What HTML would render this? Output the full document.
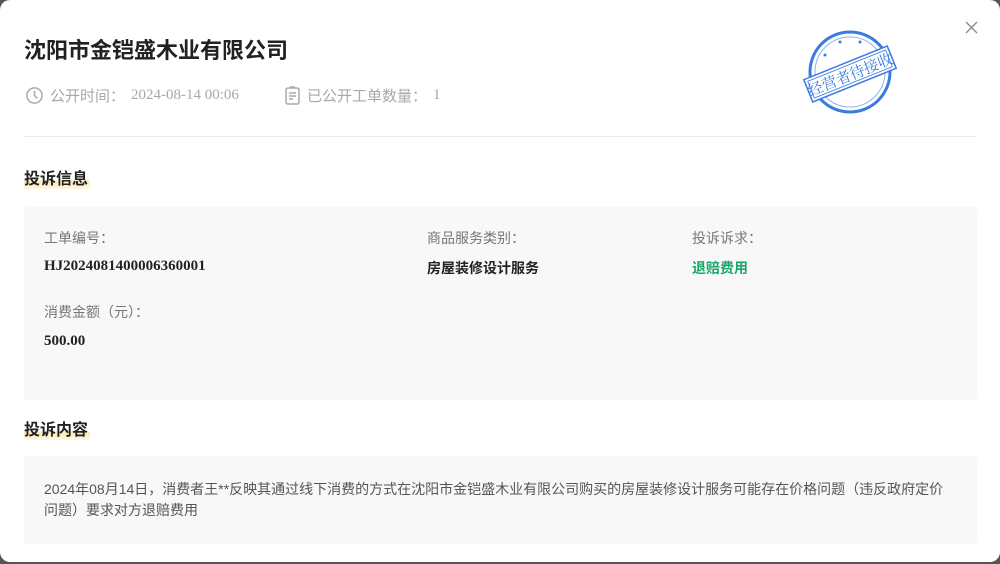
<!DOCTYPE html>
<html><head><meta charset="utf-8"><style>
*{margin:0;padding:0;box-sizing:border-box}
body{width:1000px;height:564px;background:#555;overflow:hidden;font-family:"Liberation Sans","Noto Sans CJK SC",sans-serif;position:relative}
.modal{position:absolute;left:0;top:0;width:1000px;height:562px;background:#fff;border-radius:10px;}
.title{position:absolute;left:24px;top:33px;font-size:22px;font-weight:bold;color:#222}
.meta{position:absolute;top:85px;font-size:15px;color:#a8a8a8;display:flex;align-items:center;gap:6px;font-family:"Liberation Serif","Noto Sans CJK SC",serif}
.line{position:absolute;left:24px;right:24px;top:136px;height:1px;background:#ececec}
.h{position:absolute;left:24px;font-size:16px;font-weight:bold;color:#222;background:linear-gradient(transparent 65%,#fbe9b8 65%,#fff6df 100%);padding-right:2px}
.box{position:absolute;left:24px;width:953px;background:#f8f8f8;border-radius:4px}
.lab{position:absolute;font-size:14px;color:#777}
.val{position:absolute;font-size:14px;font-weight:bold;color:#222}
</style></head><body>
<div class="modal">
<div class="title">沈阳市金铠盛木业有限公司</div>
<div class="meta" style="left:25px"><svg width="19" height="19" viewBox="0 0 20 20"><circle cx="10" cy="10" r="8" fill="none" stroke="#aaa" stroke-width="1.6"/><path d="M10 5v5l3 3" fill="none" stroke="#aaa" stroke-width="1.6"/></svg><span style="font-family:'Noto Sans CJK SC',sans-serif">公开时间：</span>2024-08-14 00:06</div>
<div class="meta" style="left:284px"><svg width="17" height="20" viewBox="0 0 17 20"><rect x="2" y="2" width="13" height="16" rx="2" fill="none" stroke="#aaa" stroke-width="1.5"/><path d="M5 7h7M5 10h7M5 13h4M6 1h5" stroke="#aaa" stroke-width="1.5"/></svg><span style="font-family:'Noto Sans CJK SC',sans-serif">已公开工单数量：</span>1</div>
<svg style="position:absolute;left:965px;top:21px" width="13" height="13" viewBox="0 0 13 13"><path d="M1 1L12 12M12 1L1 12" stroke="#888" stroke-width="1.3"/></svg>
<svg style="position:absolute;left:800px;top:28px" width="100" height="90" viewBox="0 0 100 90">
<ellipse cx="50" cy="44" rx="40" ry="40" fill="none" stroke="#3b7be0" stroke-width="3"/>
<ellipse cx="50" cy="44" rx="35" ry="35" fill="none" stroke="#8fb4ee" stroke-width="1"/>
<circle cx="40" cy="14" r="1.5" fill="#3b7be0"/><circle cx="60" cy="14" r="1.5" fill="#3b7be0"/><circle cx="25" cy="27" r="1.5" fill="#3b7be0"/>
<g transform="rotate(-22 50 46)"><rect x="5" y="34" width="90" height="24" fill="#fff" stroke="#3b7be0" stroke-width="1.5"/><rect x="8" y="37" width="84" height="18" fill="none" stroke="#3b7be0" stroke-width="0.8"/>
<text x="50" y="52" text-anchor="middle" font-size="15" fill="#3b7be0" font-family="'Noto Serif CJK SC',serif">经营者待接收</text></g>
</svg>
<div class="line"></div>
<div class="h" style="top:165px">投诉信息</div>
<div class="box" style="top:207px;height:193px">
<div class="lab" style="left:20px;top:21px">工单编号：</div>
<div class="val" style="left:20px;top:51px;font-size:15px;font-family:'Liberation Serif',serif">HJ2024081400006360001</div>
<div class="lab" style="left:20px;top:95px">消费金额（元）：</div>
<div class="val" style="left:20px;top:126px;font-size:15px;font-family:'Liberation Serif',serif">500.00</div>
<div class="lab" style="left:403px;top:21px">商品服务类别：</div>
<div class="val" style="left:403px;top:51px">房屋装修设计服务</div>
<div class="lab" style="left:668px;top:21px">投诉诉求：</div>
<div class="val" style="left:668px;top:51px;color:#1aa56a">退赔费用</div>
</div>
<div class="h" style="top:416px">投诉内容</div>
<div class="box" style="top:456px;height:88px">
<div style="position:absolute;left:20px;top:23px;width:905px;font-size:14px;line-height:21px;color:#555">2024年08月14日，消费者王**反映其通过线下消费的方式在沈阳市金铠盛木业有限公司购买的房屋装修设计服务可能存在价格问题（违反政府定价问题）要求对方退赔费用</div>
</div>
</div>
</body></html>
